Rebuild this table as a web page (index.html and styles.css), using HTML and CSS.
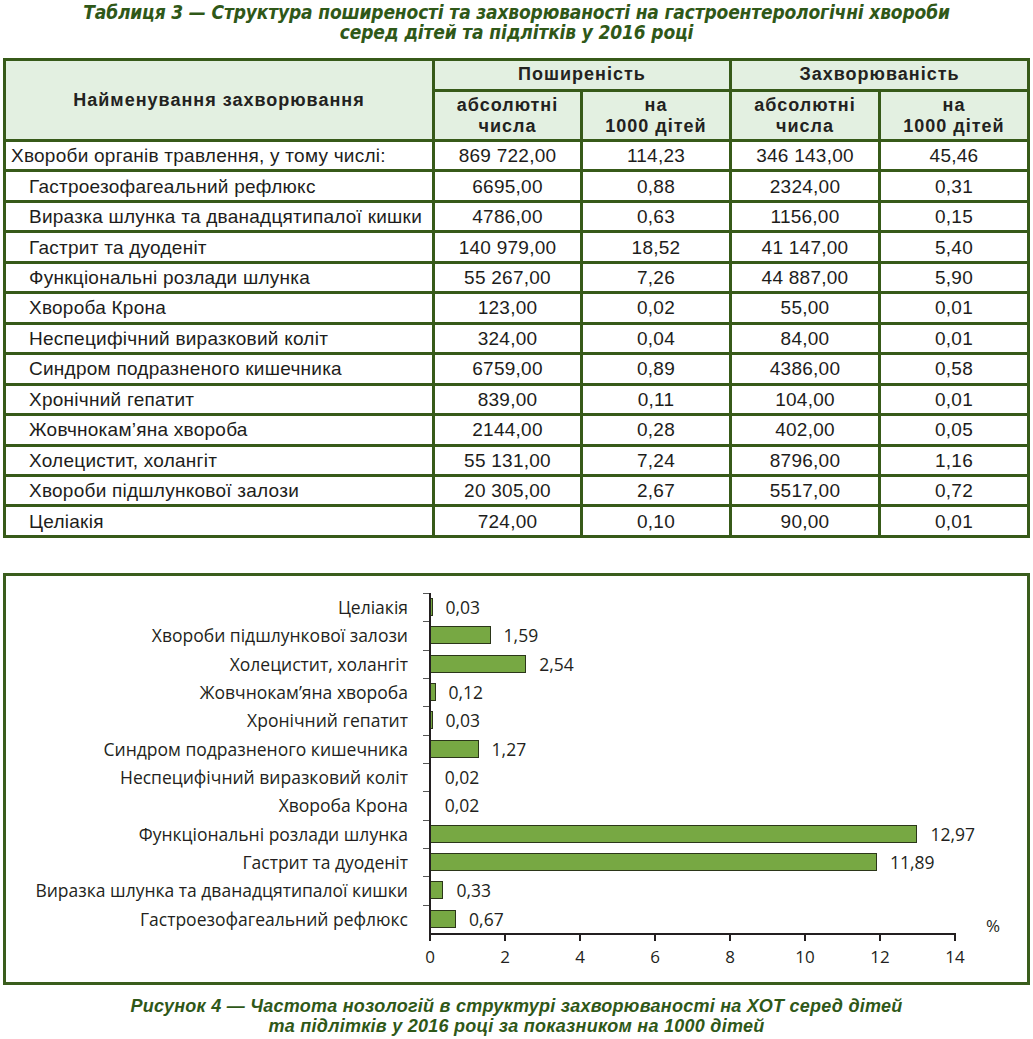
FILE: index.html
```html
<!DOCTYPE html>
<html lang="uk">
<head>
<meta charset="utf-8">
<title>Таблиця 3</title>
<link rel="stylesheet" href="styles.css">
</head>
<body>
<h1 class="title">Таблиця 3 — Структура поширеності та захворюваності на гастроентерологічні хвороби<br>серед дітей та підлітків у 2016 році</h1>

<table class="tbl">
  <colgroup>
    <col class="c-name"><col class="c-a"><col class="c-b"><col class="c-b"><col class="c-b">
  </colgroup>
  <thead>
    <tr class="h1">
      <th rowspan="2" class="head-name">Найменування захворювання</th>
      <th colspan="2">Поширеність</th>
      <th colspan="2">Захворюваність</th>
    </tr>
    <tr class="h2">
      <th>абсолютні<br>числа</th>
      <th>на<br>1000 дітей</th>
      <th>абсолютні<br>числа</th>
      <th>на<br>1000 дітей</th>
    </tr>
  </thead>
  <tbody>
    <tr><td class="name">Хвороби органів травлення, у тому числі:</td><td>869 722,00</td><td>114,23</td><td>346 143,00</td><td>45,46</td></tr>
    <tr><td class="name sub">Гастроезофагеальний рефлюкс</td><td>6695,00</td><td>0,88</td><td>2324,00</td><td>0,31</td></tr>
    <tr><td class="name sub">Виразка шлунка та дванадцятипалої кишки</td><td>4786,00</td><td>0,63</td><td>1156,00</td><td>0,15</td></tr>
    <tr><td class="name sub">Гастрит та дуоденіт</td><td>140 979,00</td><td>18,52</td><td>41 147,00</td><td>5,40</td></tr>
    <tr><td class="name sub">Функціональні розлади шлунка</td><td>55 267,00</td><td>7,26</td><td>44 887,00</td><td>5,90</td></tr>
    <tr><td class="name sub">Хвороба Крона</td><td>123,00</td><td>0,02</td><td>55,00</td><td>0,01</td></tr>
    <tr><td class="name sub">Неспецифічний виразковий коліт</td><td>324,00</td><td>0,04</td><td>84,00</td><td>0,01</td></tr>
    <tr><td class="name sub">Синдром подразненого кишечника</td><td>6759,00</td><td>0,89</td><td>4386,00</td><td>0,58</td></tr>
    <tr><td class="name sub">Хронічний гепатит</td><td>839,00</td><td>0,11</td><td>104,00</td><td>0,01</td></tr>
    <tr><td class="name sub">Жовчнокам’яна хвороба</td><td>2144,00</td><td>0,28</td><td>402,00</td><td>0,05</td></tr>
    <tr><td class="name sub">Холецистит, холангіт</td><td>55 131,00</td><td>7,24</td><td>8796,00</td><td>1,16</td></tr>
    <tr><td class="name sub">Хвороби підшлункової залози</td><td>20 305,00</td><td>2,67</td><td>5517,00</td><td>0,72</td></tr>
    <tr><td class="name sub">Целіакія</td><td>724,00</td><td>0,10</td><td>90,00</td><td>0,01</td></tr>
  </tbody>
</table>

<figure class="chart">
  <div class="plot">
    <div class="row"><span class="lbl">Целіакія</span><div class="track"><span class="bar" style="width:1.5px"></span><span class="val">0,03</span></div></div>
    <div class="row"><span class="lbl">Хвороби підшлункової залози</span><div class="track"><span class="bar" style="width:59.6px"></span><span class="val">1,59</span></div></div>
    <div class="row"><span class="lbl">Холецистит, холангіт</span><div class="track"><span class="bar" style="width:95.3px"></span><span class="val">2,54</span></div></div>
    <div class="row"><span class="lbl">Жовчнокам’яна хвороба</span><div class="track"><span class="bar" style="width:4.5px"></span><span class="val">0,12</span></div></div>
    <div class="row"><span class="lbl">Хронічний гепатит</span><div class="track"><span class="bar" style="width:1.5px"></span><span class="val">0,03</span></div></div>
    <div class="row"><span class="lbl">Синдром подразненого кишечника</span><div class="track"><span class="bar" style="width:47.6px"></span><span class="val">1,27</span></div></div>
    <div class="row"><span class="lbl">Неспецифічний виразковий коліт</span><div class="track"><span class="bar thin" style="width:0.75px"></span><span class="val">0,02</span></div></div>
    <div class="row"><span class="lbl">Хвороба Крона</span><div class="track"><span class="bar thin" style="width:0.75px"></span><span class="val">0,02</span></div></div>
    <div class="row"><span class="lbl">Функціональні розлади шлунка</span><div class="track"><span class="bar" style="width:486.4px"></span><span class="val">12,97</span></div></div>
    <div class="row"><span class="lbl">Гастрит та дуоденіт</span><div class="track"><span class="bar" style="width:445.9px"></span><span class="val">11,89</span></div></div>
    <div class="row"><span class="lbl">Виразка шлунка та дванадцятипалої кишки</span><div class="track"><span class="bar" style="width:12.4px"></span><span class="val">0,33</span></div></div>
    <div class="row"><span class="lbl">Гастроезофагеальний рефлюкс</span><div class="track"><span class="bar" style="width:25.1px"></span><span class="val">0,67</span></div></div>
  </div>
  <div class="xaxis">
    <div class="tick"><span>0</span></div>
    <div class="tick"><span>2</span></div>
    <div class="tick"><span>4</span></div>
    <div class="tick"><span>6</span></div>
    <div class="tick"><span>8</span></div>
    <div class="tick"><span>10</span></div>
    <div class="tick"><span>12</span></div>
    <div class="tick"><span>14</span></div>
  </div>
  <span class="pct">%</span>
</figure>

<p class="caption">Рисунок 4 — Частота нозологій в структурі захворюваності на ХОТ серед дітей<br>та підлітків у 2016 році за показником на 1000 дітей</p>
</body>
</html>
```

FILE: styles.css
```css
html, body {
  margin: 0;
  padding: 0;
  background: #ffffff;
}

body {
  width: 1033px;
  font-family: "Liberation Sans", Arial, sans-serif;
  color: #1d1d1b;
}

.title {
  margin: 2px 0 0 0;
  font-family: "Liberation Sans Narrow", "DejaVu Sans Condensed", "Liberation Sans", sans-serif;
  font-stretch: condensed;
  font-size: 19px;
  line-height: 20px;
  letter-spacing: -0.15px;
  font-weight: bold;
  font-style: italic;
  text-align: center;
  color: #2f5818;
}

/* ---------- table ---------- */
.tbl {
  margin: 16px 0 0 3px;
  width: 1027px;
  table-layout: fixed;
  border-collapse: separate;
  border-spacing: 0;
  border-top: 3px solid #375a19;
  border-left: 3px solid #375a19;
  font-size: 19px;
  letter-spacing: 0.25px;
}

.c-name { width: 429px; }
.c-a { width: 148px; }
.c-b { width: 149px; }

.tbl th,
.tbl td {
  box-sizing: border-box;
  border-right: 3px solid #375a19;
  border-bottom: 3px solid #375a19;
  padding: 0;
  text-align: center;
  vertical-align: middle;
}

.tbl th {
  background: #e3f0e1;
  font-size: 18px;
  letter-spacing: 1px;
  font-weight: bold;
  line-height: 21px;
  color: #222220;
}

.tbl .h1 th { height: 31px; padding-bottom: 1px; }
.tbl .h2 th { height: 50px; padding-top: 1px; }
.tbl .h1 th.head-name { padding: 0; }

.tbl td {
  height: 30.46px;
  line-height: 20px;
  padding-top: 1px;
}

.tbl td.name {
  text-align: left;
  padding-left: 5px;
}

.tbl td.sub {
  padding-left: 23px;
}

/* ---------- chart ---------- */
.chart {
  position: relative;
  box-sizing: border-box;
  margin: 35px 0 0 3px;
  width: 1027px;
  height: 412px;
  border: 3px solid #3a5d1d;
  padding: 17px 0 0 0;
  font-family: "Open Sans", "Noto Sans", sans-serif;
  color: #231f20;
}

.plot {
  display: flex;
  flex-direction: column;
}

.row {
  display: grid;
  grid-template-columns: 423px 1fr;
  height: 28.33px;
  align-items: center;
}

.lbl {
  text-align: right;
  padding-right: 21px;
  font-size: 17.5px;
  line-height: 20px;
  white-space: nowrap;
}

.track {
  position: relative;
  height: 100%;
  display: flex;
  align-items: center;
  border-left: 2px solid #231f20;
}

.track::before {
  content: "";
  position: absolute;
  left: -8px;
  top: 0;
  width: 6px;
  height: 1px;
  background: #555555;
}

.bar {
  box-sizing: border-box;
  height: 18px;
  background: #77a843;
  border: 1px solid #2b3619;
  border-left: 0;
}

.bar.thin {
  border: 0;
  background: transparent;
}

.val {
  margin-left: 13px;
  font-size: 17.5px;
  line-height: 20px;
}

.xaxis {
  margin-left: 423px;
  width: 527px;
  display: flex;
  justify-content: space-between;
  border-top: 2px solid #231f20;
}

.tick {
  width: 2px;
  height: 6px;
  background: #231f20;
  display: flex;
  flex-direction: column;
  align-items: center;
}

.tick span {
  margin-top: 12px;
  font-size: 17px;
  line-height: 20px;
}

.pct {
  position: absolute;
  right: 27px;
  top: 340px;
  font-size: 17px;
  line-height: 20px;
}

.caption {
  margin: 11px 0 0 0;
  font-family: "Liberation Sans", Arial, sans-serif;
  font-size: 18px;
  letter-spacing: 0.25px;
  line-height: 20px;
  font-weight: bold;
  font-style: italic;
  text-align: center;
  color: #2f5818;
}
```
